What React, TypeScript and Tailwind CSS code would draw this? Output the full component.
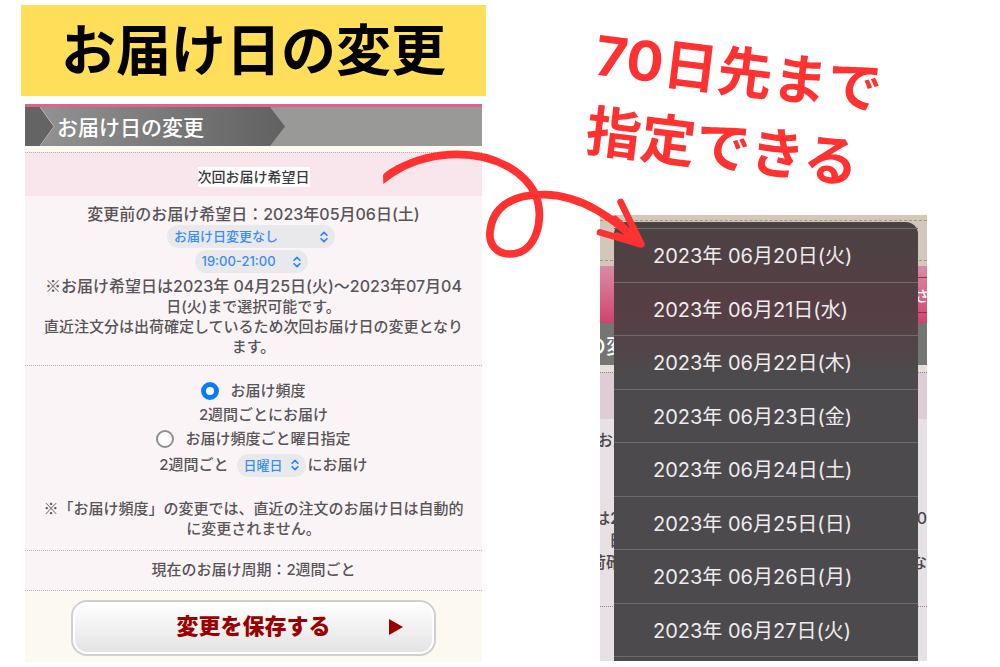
import type { ReactNode } from "react";
import { ChevronsUpDown } from "lucide-react";

const dates = [
  "2023年 06月20日(火)",
  "2023年 06月21日(水)",
  "2023年 06月22日(木)",
  "2023年 06月23日(金)",
  "2023年 06月24日(土)",
  "2023年 06月25日(日)",
  "2023年 06月26日(月)",
  "2023年 06月27日(火)",
];

type PillSelectProps = {
  label: string;
  width: string;
  children: ReactNode;
};

function PillSelect({ label, width, children }: PillSelectProps) {
  return (
    <span className={`relative inline-flex items-center ${width}`}>
      <select
        aria-label={label}
        className="h-[23px] w-full appearance-none rounded-full bg-[#e9e9ec] pl-[7px] text-[13px] leading-[23px] text-[#3b8df5]"
      >
        {children}
      </select>
      <ChevronsUpDown className="pointer-events-none absolute right-1 h-[14px] w-[14px] text-[#2f86f6]" strokeWidth={3} />
    </span>
  );
}

function Radio({ id, checked }: { id: string; checked?: boolean }) {
  return (
    <input
      type="radio"
      id={id}
      name="frequency"
      defaultChecked={checked}
      className="h-[18px] w-[18px] appearance-none rounded-full border-2 border-[#8f8f8f] bg-white checked:border-[5px] checked:border-[#0a7aff]"
    />
  );
}

// Inter draws this mark too small, so it takes the Japanese face
function NoteMark() {
  return <span className="font-['Noto_Sans_CJK_JP',sans-serif]">※</span>;
}

function TitleBar() {
  return (
    <div className="relative h-[42px] border-t-[3px] border-[#e2628f] bg-[#999a98]">
      <svg className="absolute top-0 left-0 h-[39px] w-[260px]" viewBox="0 0 260 39" aria-hidden="true">
        <defs>
          <linearGradient id="crumb" x1="0" x2="1">
            <stop offset="0" stopColor="#929292" />
            <stop offset="0.45" stopColor="#7c7c7c" />
            <stop offset="1" stopColor="#616161" />
          </linearGradient>
        </defs>
        <path d="M14 0H245L260 19.5L245 39H14Z" fill="url(#crumb)" />
        <path d="M0 0H15L29 19.5L15 39H0Z" fill="#646464" />
        <path d="M15 0L29 19.5L15 39" fill="none" stroke="#b5b5b5" />
      </svg>
      <h2 className="relative pl-8 text-left text-[21px] leading-[42px] text-white">お届け日の変更</h2>
    </div>
  );
}

function DeliveryForm() {
  return (
    <form className="mx-1 mt-2 bg-[#fbf9f0] text-center text-[15px] leading-5 font-medium text-[#585457]">
      <TitleBar />

      <div className="mt-[6px] border-t border-dotted border-[#b5afb1] bg-[#f8e6ec] pt-[14px] pb-[9px]">
        <h3 className="mx-auto w-fit bg-white text-sm leading-5 text-[#3d3a3c]">次回お届け希望日</h3>
      </div>

      {/* Date and time */}
      <section className="bg-[#fbf4f7] pt-2 pb-2">
        <p className="text-base leading-[21px]">変更前のお届け希望日：2023年05月06日(土)</p>
        <div className="flex flex-col items-center gap-[2px] pr-[5px] pb-[2px]">
          <PillSelect label="お届け日" width="w-[168px]">
            <option>お届け日変更なし</option>
          </PillSelect>
          <PillSelect label="お届け時間" width="w-[113px]">
            <option>19:00-21:00</option>
          </PillSelect>
        </div>
        <p>
          <span className="text-base leading-5">
            <NoteMark />
            お届け希望日は2023年 04月25日(火)〜2023年07月04
          </span>
          <br />
          日(火)まで選択可能です。
          <br />
          直近注文分は出荷確定しているため次回お届け日の変更となり
          <br />
          ます。
        </p>
      </section>

      {/* Frequency */}
      <section className="border-t border-dotted border-[#b5afb1] bg-[#fbf4f7] pt-[13px] pb-[11px]">
        <div className="flex items-center justify-center gap-[11px] leading-6">
          <Radio id="every" checked />
          <label htmlFor="every">お届け頻度</label>
        </div>
        <p className="pl-5 leading-6">2週間ごとにお届け</p>
        <div className="flex items-center justify-center gap-[11px] leading-6">
          <Radio id="weekday" />
          <label htmlFor="weekday">お届け頻度ごと曜日指定</label>
        </div>
        <p className="flex items-center justify-center pt-[2px] pl-5 leading-6">
          2週間ごと
          <span className="mr-[2px] ml-2 inline-flex">
            <PillSelect label="曜日" width="w-[69px]">
              <option>日曜日</option>
            </PillSelect>
          </span>
          にお届け
        </p>
        <p className="pt-[21px]">
          <NoteMark />
          「お届け頻度」の変更では、直近の注文のお届け日は自動的
          <br />
          に変更されません。
        </p>
      </section>

      <p className="border-y border-dotted border-[#b5afb1] bg-[#fbf4f7] pt-[9px] pb-[10px]">
        現在のお届け周期：2週間ごと
      </p>

      <div className="px-[46px] pt-[9px] pb-[6px]">
        <button
          type="button"
          className="relative block h-14 w-full rounded-2xl border-2 border-[#d0d0d0] bg-linear-to-b from-white via-[#f1f1f1] via-50% to-[#e2e2e2] pb-1 text-[22px] font-black text-[#9b0000] inset-ring-2 inset-ring-white"
        >
          変更を保存する
          <svg className="absolute top-[17px] right-[30px] h-4 w-4" viewBox="0 0 16 16" aria-hidden="true">
            <path d="M1 0L15 8L1 16Z" fill="#9b0000" />
          </svg>
        </button>
      </div>
    </form>
  );
}

// Page that stays visible on both sides of the open menu
function PageBehind() {
  return (
    <div className="flex h-full flex-col whitespace-nowrap text-base leading-[22px] font-medium text-[#4b474a]" aria-hidden="true">
      <div className="h-[51px] bg-[#d2c7b9] py-[5px]">
        <div className="h-full border-y border-dashed border-[#a0968a]" />
      </div>
      <div className="flex h-[57px] items-center justify-end bg-linear-to-b from-[#d98aa6] to-[#cf416f] text-white">
        <div className="h-9 w-3 border-y border-[#8b3150] text-sm leading-9">さ</div>
      </div>
      <div className="h-[42px] bg-[#747674] text-[21px] leading-[46px] text-white">
        <span className="-ml-[15px]">の変</span>
      </div>
      <div className="h-[7px] bg-[#e5e0da]" />
      <div className="h-[47px] border-t border-dotted border-[#8f888a] bg-[#dfcdd5]" />
      <div className="h-[187px] bg-[#e7e0e4] pt-[10px]">
        <p className="-ml-[3px]">お届け</p>
        <p className="mt-14 flex justify-between">
          <span className="-ml-[6px]">は2</span>
          <span>0</span>
        </p>
        <p className="pl-[9px]">日</p>
        <p className="flex justify-between">
          <span className="-ml-[10px]">荷確</span>
          <span>な</span>
        </p>
      </div>
      <div className="flex-1 border-t border-dotted border-[#8f888a] bg-[#e7e0e4]" />
    </div>
  );
}

function DateMenu() {
  return (
    <div className="relative ml-[10px] h-[446px] overflow-hidden">
      <PageBehind />
      <ul className="absolute top-[7px] right-[9px] bottom-0 left-[14px] flex flex-col rounded-t-xl bg-linear-to-b from-[#4a4243] via-[#573e45] via-20% to-[#4c4a4c] to-35% pt-[6px] pb-1">
        {dates.map((date) => (
          <li key={date} className="flex-1 border-t border-[#716a6d] last:border-b">
            <button type="button" className="flex h-full w-full items-center pt-[2px] pl-[39px] text-xl text-[#eeecee]">
              {date}
            </button>
          </li>
        ))}
      </ul>
    </div>
  );
}

function LoopArrow() {
  return (
    <svg
      className="pointer-events-none absolute top-[148px] left-[38%] h-[115px] w-[270px]"
      viewBox="30 24 810 345"
      fill="none"
      stroke="#ff3131"
      strokeLinecap="round"
      aria-hidden="true"
    >
      <path
        d="M82 88C140 57 198 43 262 43C375 43 465 95 497 165C525 235 500 342 420 342C380 342 356 314 360 276C366 205 420 163 522 164C640 165 735 240 812 312"
        strokeWidth="23"
        strokeLinecap="butt"
      />
      <path d="M40 132L39 105Q42 96 78 77L92 71L98 93Q70 108 40 132Z" fill="#ff3131" stroke="none" />
      <path d="M752 186L814 313L690 277" strokeWidth="20" strokeLinejoin="round" />
      <path d="M735 238L812 312L740 288" strokeWidth="22" />
    </svg>
  );
}

export default function App() {
  return (
    <main className="relative grid grid-cols-[465fr_337fr] gap-x-[104px] bg-white pr-[73px] pl-[21px] font-['Inter','Noto_Sans_CJK_JP',sans-serif]">
      <div className="pt-[5px]">
        <h1 className="bg-[#ffde59] text-center text-[55px] leading-[91px] font-bold text-black">お届け日の変更</h1>
        <DeliveryForm />
      </div>

      <div>
        <div className="h-[215px] pt-[34px]">
          <p className="w-fit rotate-[7deg] text-[55px] leading-[76px] font-bold whitespace-nowrap text-[#ff3131]">
            <span className="block">70日先まで</span>
            <span className="block">指定できる</span>
          </p>
        </div>
        <DateMenu />
      </div>

      <LoopArrow />
    </main>
  );
}
